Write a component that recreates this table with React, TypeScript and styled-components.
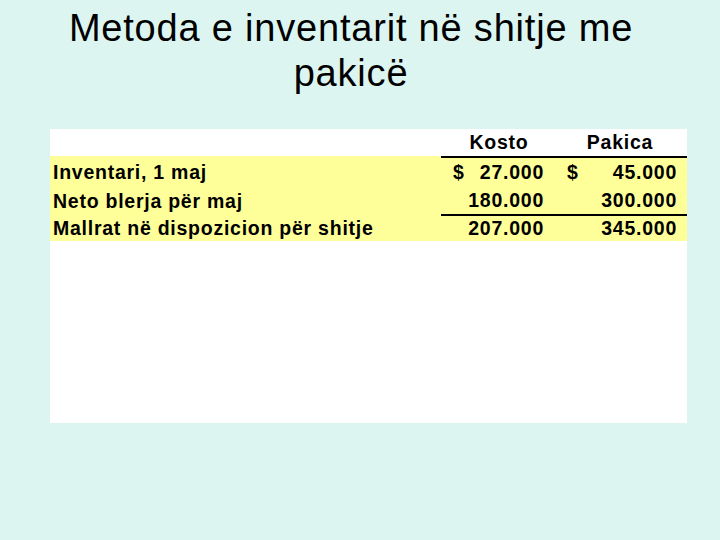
import React from "react";
import styled, { createGlobalStyle } from "styled-components";

const Global = createGlobalStyle`
  html, body { margin: 0; padding: 0; }
  body {
    background: #dcf5f1;
    width: 720px;
    height: 540px;
    overflow: hidden;
    font-family: "Liberation Sans", Arial, sans-serif;
  }
`;

const Slide = styled.div`
  width: 720px;
  height: 540px;
  display: flex;
  flex-direction: column;
`;

const Title = styled.h1`
  margin: 0;
  padding: 6px 18px 0 0;
  font-weight: normal;
  font-size: 38px;
  letter-spacing: 0.8px;
  line-height: 45px;
  text-align: center;
  color: #000;
  height: 129px;
  box-sizing: border-box;
`;

const Panel = styled.div`
  margin-left: 50px;
  width: 637px;
  height: 294px;
  background: #ffffff;
`;

const Table = styled.div`
  display: grid;
  grid-template-columns: 391px 120px 126px;
  font-weight: bold;
  font-size: 19.5px;
  letter-spacing: 0.75px;
  color: #000;
`;

const HeadCell = styled.div<{ $shift?: number }>`
  height: 27px;
  line-height: 27px;
  text-align: center;
  padding-right: ${(p) => p.$shift ?? 0}px;
`;

const Label = styled.div<{ $h: number; $pad: number }>`
  background: #ffff99;
  height: ${(p) => p.$h}px;
  line-height: ${(p) => p.$h}px;
  padding: ${(p) => p.$pad}px 0 0 3px;
  white-space: nowrap;
`;

const Amount = styled.div<{
  $h: number;
  $top: number;
  $bottom: number;
  $left: number;
  $right: number;
}>`
  background: #ffff99;
  height: ${(p) => p.$h + p.$top + p.$bottom}px;
  line-height: ${(p) => p.$h}px;
  box-sizing: border-box;
  border-top: ${(p) => p.$top}px solid #000;
  border-bottom: ${(p) => p.$bottom}px solid #000;
  display: flex;
  justify-content: space-between;
  padding-left: ${(p) => p.$left}px;
  padding-right: ${(p) => p.$right}px;
`;

const Num = styled.span`
  margin-left: auto;
`;

const rows = [
  { label: "Inventari, 1 maj", cost: "27.000", retail: "45.000", dollar: true, h: 28, top: 2, bottom: 0 },
  { label: "Neto blerja për maj", cost: "180.000", retail: "300.000", dollar: false, h: 28, top: 0, bottom: 2 },
  { label: "Mallrat në dispozicion për shitje", cost: "207.000", retail: "345.000", dollar: false, h: 25, top: 0, bottom: 0 },
];

export default function App() {
  return (
    <Slide>
      <Global />
      <Title>
        Metoda e inventarit në shitje me
        <br />
        pakicë
      </Title>
      <Panel>
        <Table>
          <HeadCell />
          <HeadCell $shift={4}>Kosto</HeadCell>
          <HeadCell $shift={8}>Pakica</HeadCell>
          {rows.map((r) => (
            <React.Fragment key={r.label}>
              <Label $h={r.h + r.bottom} $pad={r.top}>
                {r.label}
              </Label>
              <Amount $h={r.h} $top={r.top} $bottom={r.bottom} $left={12} $right={17}>
                {r.dollar && <span>$</span>}
                <Num>{r.cost}</Num>
              </Amount>
              <Amount $h={r.h} $top={r.top} $bottom={r.bottom} $left={6} $right={10}>
                {r.dollar && <span>$</span>}
                <Num>{r.retail}</Num>
              </Amount>
            </React.Fragment>
          ))}
        </Table>
      </Panel>
    </Slide>
  );
}
